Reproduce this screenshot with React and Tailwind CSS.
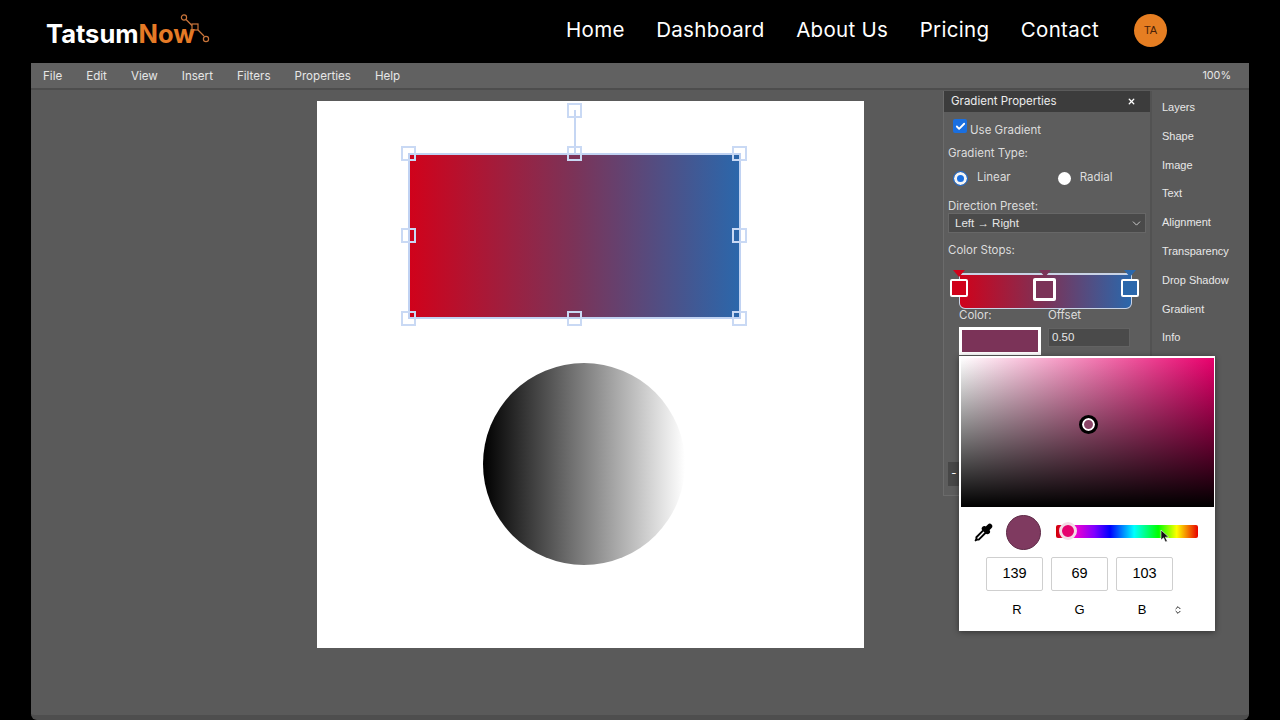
import React from "react";
import { Check, ChevronDown, ChevronsUpDown, X } from "lucide-react";

const navLinks = ["Home", "Dashboard", "About Us", "Pricing", "Contact"];
const menuItems = ["File", "Edit", "View", "Insert", "Filters", "Properties", "Help"];
const sideItems = ["Layers", "Shape", "Image", "Text", "Alignment", "Transparency", "Drop Shadow", "Gradient", "Info"];

// canvas coords of the selection handles, relative to the white page
const handles = [
  [91, 52], [257, 52], [422, 52],
  [91, 134], [422, 134],
  [91, 217], [257, 217], [422, 217],
  [257, 9],
];

function Logo() {
  return (
    <div className="relative w-[166px] h-[40px] shrink-0">
      <div className="pt-[7px] text-[25.5px] leading-[34px] font-bold font-['Inter',sans-serif] text-white">
        Tatsum<span className="text-[#e57a26]">Now</span>
      </div>
      <svg className="absolute left-[132px] top-[4px]" width="36" height="32" viewBox="0 0 36 32" fill="none" stroke="#c9743a" strokeWidth="1.2">
        <circle cx="6" cy="3.5" r="2.6" />
        <line x1="8" y1="5.5" x2="14" y2="11.5" />
        <rect x="14" y="10" width="6" height="6" />
        <line x1="20" y1="16" x2="26" y2="22" />
        <circle cx="28" cy="25" r="2.6" />
      </svg>
    </div>
  );
}

function Header() {
  return (
    <header className="h-[63px] shrink-0 bg-black flex items-center pl-[46px] pr-[113px] pb-[3px]">
      <Logo />
      <nav className="ml-auto flex items-center gap-[31.5px] text-[20.5px] tracking-[0.3px] text-white font-['Inter',sans-serif]">
        {navLinks.map((l) => (
          <a key={l} href="#">{l}</a>
        ))}
      </nav>
      <div className="ml-[35px] w-[33px] h-[33px] rounded-full bg-[#e67e22] flex items-center justify-center text-[11px] text-[#4a2208] font-['Liberation_Sans',sans-serif]">
        TA
      </div>
    </header>
  );
}

function MenuBar() {
  return (
    <div className="h-[27px] shrink-0 flex items-center justify-between bg-[#616161] border-b-2 border-[#4d4d4d] pt-[2px] pl-[12px] pr-[18px] text-[11.6px] text-[#e6e6e6] font-['Inter',sans-serif]">
      <div className="flex gap-[24px]">
        {menuItems.map((m) => (
          <span key={m}>{m}</span>
        ))}
      </div>
      <span className="text-[10.8px]">100%</span>
    </div>
  );
}

function Canvas() {
  return (
    <div className="w-[912px] shrink-0 pl-[286px] pt-[11px]">
      <div className="relative w-[547px] h-[547px] bg-white">
        <div className="absolute left-[91px] top-[52px] w-[333px] h-[166px] border-2 border-[#c0d2f2] bg-[linear-gradient(to_right,#d0021b,#7b3358_50%,#2b67ab)]" />
        <div className="absolute left-[257px] top-[9px] w-[2px] h-[44px] bg-[#c5d6f3]" />
        {handles.map(([x, y], i) => (
          <div
            key={i}
            className="absolute w-[15px] h-[15px] -ml-[7px] -mt-[7px] border-2 border-[#c9d9f4]"
            style={{ left: x, top: y }}
          />
        ))}
        <div className="absolute left-[166px] top-[262px] w-[202px] h-[202px] rounded-full bg-[linear-gradient(to_right,#000,#fff)]" />
      </div>
    </div>
  );
}

function StopHandle({ color, big, className }) {
  return (
    <div
      className={`absolute rounded-[2px] border-white ${big ? "w-[23px] h-[23px] border-[3px]" : "w-[18px] h-[18px] border-2"} ${className}`}
      style={{ backgroundColor: color }}
    />
  );
}

function ColorStops() {
  return (
    <div className="relative h-[40px] mt-[12px]">
      <div className="absolute left-[11px] top-[4px] w-[173px] h-[36px] rounded-b-[6px] border border-t-2 border-[#c9d3e6] bg-[linear-gradient(to_right,#d0021b,#7b3358_50%,#2b67ab)]" />
      <div className="absolute left-[5px] top-[1px] w-0 h-0 border-x-[6px] border-x-transparent border-t-[7px] border-t-[#d0021b]" />
      <div className="absolute left-[91px] top-[1px] w-0 h-0 border-x-[6px] border-x-transparent border-t-[7px] border-t-[#7b3358]" />
      <div className="absolute left-[176px] top-[1px] w-0 h-0 border-x-[6px] border-x-transparent border-t-[7px] border-t-[#2b67ab]" />
      <StopHandle color="#d0021b" className="left-[2px] top-[10px]" />
      <StopHandle color="#7b3358" big className="left-[85px] top-[9px]" />
      <StopHandle color="#2b67ab" className="left-[173px] top-[10px]" />
    </div>
  );
}

function Dropper() {
  return (
    <svg className="ml-[15px] shrink-0" width="19" height="19" viewBox="0 0 24 24" fill="none" stroke="#000" strokeWidth="2.4" strokeLinecap="round" strokeLinejoin="round">
      <path d="m2 22 1-1h3l9-9" />
      <path d="M3 21v-3l9-9" />
      <path fill="#000" d="m15 6 3.4-3.4a2.1 2.1 0 1 1 3 3L18 9l.4.4a2.1 2.1 0 1 1-3 3l-3.8-3.8a2.1 2.1 0 1 1 3-3l.4.4Z" />
    </svg>
  );
}

function ColorPicker() {
  return (
    <div className="absolute left-[15px] top-[265px] w-[256px] h-[275px] bg-white shadow-[0_1px_6px_rgba(0,0,0,0.45)] z-10 font-['Liberation_Sans',sans-serif] text-black">
      <div className="relative ml-[2px] mr-[1px] mt-[2px] h-[149px] bg-[linear-gradient(to_top,#000,transparent),linear-gradient(to_right,#fff,#e8006c)]">
        <div className="absolute left-[121px] top-[60px] w-[13px] h-[13px] rounded-full bg-[#8b4567] border-2 border-white outline-[3px] outline-solid outline-black" />
      </div>
      <div className="flex items-center h-[50px] pt-[1px]">
        <Dropper />
        <div className="ml-[13px] w-[35px] h-[35px] rounded-full bg-[#7f3a60] border border-[#5e2a47]" />
        <div className="relative ml-[15px] w-[142px] h-[13px] rounded-[2px] -mt-[2px] bg-[linear-gradient(to_right,#d00000,#ff00c8_12%,#8000ff_27%,#0000ff_38%,#00ffff_55%,#00ff00_72%,#ffff00_85%,#e80000)]">
          <div className="absolute left-[3px] -top-[3px] w-[18px] h-[18px] rounded-full bg-[#e6006e] border-[3px] border-[#f3dbe6]" />
          <svg className="absolute left-[104px] top-[4px]" width="10" height="14" viewBox="0 0 10 14">
            <path d="M1 1 L1 11 L3.5 8.8 L5.5 13 L7.3 12.2 L5.3 8.2 L8.6 8 Z" fill="#111" stroke="#fff" strokeWidth="0.6" />
          </svg>
        </div>
      </div>
      <div className="flex gap-[8px] pl-[27px]">
        {[139, 69, 103].map((v) => (
          <div key={v} className="w-[57px] h-[34px] rounded-[2px] border border-[#cfcfcf] flex items-center justify-center text-[14.5px]">
            {v}
          </div>
        ))}
      </div>
      <div className="flex items-center gap-[8px] pl-[27px] mt-[11px] text-[13px] h-[15px]">
        <span className="w-[57px] pl-[5px] text-center">R</span>
        <span className="w-[57px] text-center">G</span>
        <span className="w-[57px] pr-[5px] text-center">B</span>
        <ChevronsUpDown size={10} strokeWidth={2} className="-ml-[8px]" />
      </div>
    </div>
  );
}

function GradientPanel() {
  return (
    <div className="relative w-[209px] h-[405px] shrink-0 mt-[1px] border-l border-b border-r-2 border-l-[#6b6b6b] border-b-[#6b6b6b] border-r-[#525252] bg-[#5d5d5d] text-[11.5px] text-[#dcdcdc] font-['Inter',sans-serif]">
      <div className="h-[21px] flex items-center justify-between bg-[#3c3c3c] pl-[7px] pr-[14px] text-[#ececec]">
        <span>Gradient Properties</span>
        <X size={9} strokeWidth={3.5} className="text-white" />
      </div>
      <div className="px-[4px]">
        <div className="flex items-start pt-[7px] pl-[5px] h-[31px]">
          <span className="w-[14px] h-[14px] rounded-[2px] bg-[#1a6fe0] flex items-center justify-center">
            <Check size={11} strokeWidth={4} className="text-white" />
          </span>
          <span className="ml-[3px] mt-[3px]">Use Gradient</span>
        </div>
        <div className="mt-[3px] leading-[14px]">Gradient Type:</div>
        <div className="flex items-center h-[18px] mt-[9px] pl-[6px]">
          <span className="w-[13px] h-[13px] rounded-full bg-[#1a6fe0] border-[3px] border-[#f4f4f4] outline outline-1 outline-[#1a6fe0]" />
          <span className="ml-[10px] -mt-[1px]">Linear</span>
          <span className="ml-[47px] w-[13px] h-[13px] rounded-full bg-white" />
          <span className="ml-[9px] -mt-[1px]">Radial</span>
        </div>
        <div className="mt-[12px] leading-[14px]">Direction Preset:</div>
        <div className="w-[198px] h-[20px] flex items-center justify-between bg-[#4a4a4a] border border-[#676767] pl-[6px] pr-[2px] pt-[1px] font-['Liberation_Sans',sans-serif] text-[11.5px] text-[#e6e6e6]">
          <span>Left → Right</span>
          <ChevronDown size={13} strokeWidth={1.5} />
        </div>
        <div className="mt-[10px] leading-[14px]">Color Stops:</div>
        <ColorStops />
        <div className="flex pl-[11px] mt-[-1px]">
          <div className="w-[89px]">
            <div className="leading-[14px]">Color:</div>
            <div className="mt-[5px] w-[82px] h-[28px] border-[3px] border-white bg-[#7b3358]" />
          </div>
          <div>
            <div className="leading-[14px]">Offset</div>
            <div className="mt-[6px] w-[82px] h-[19px] flex items-center bg-[#4a4a4a] border border-[#626262] pl-[3px] font-['Liberation_Sans',sans-serif] text-[11.5px] text-[#e6e6e6]">
              0.50
            </div>
          </div>
        </div>
      </div>
      <div className="absolute left-[4px] top-[371px] w-[12px] h-[24px] bg-[#474747] text-white leading-[22px] text-center">-</div>
      <ColorPicker />
    </div>
  );
}

function SideList() {
  return (
    <div className="flex-1 pl-[10px] pt-[10px] font-['Liberation_Sans',sans-serif] text-[11px] text-[#e8e8e8]">
      {sideItems.map((s) => (
        <div key={s} className="h-[28.8px] leading-[15px]">{s}</div>
      ))}
    </div>
  );
}

export default function App() {
  return (
    <div className="w-[1280px] h-[720px] bg-black flex flex-col overflow-hidden">
      <Header />
      <div className="flex-1 ml-[31px] w-[1218px] flex flex-col bg-[#5a5a5a] border-b-[5px] border-[#4e4e4e] rounded-b-[6px] overflow-hidden">
        <MenuBar />
        <div className="flex-1 flex">
          <Canvas />
          <GradientPanel />
          <SideList />
        </div>
      </div>
    </div>
  );
}
